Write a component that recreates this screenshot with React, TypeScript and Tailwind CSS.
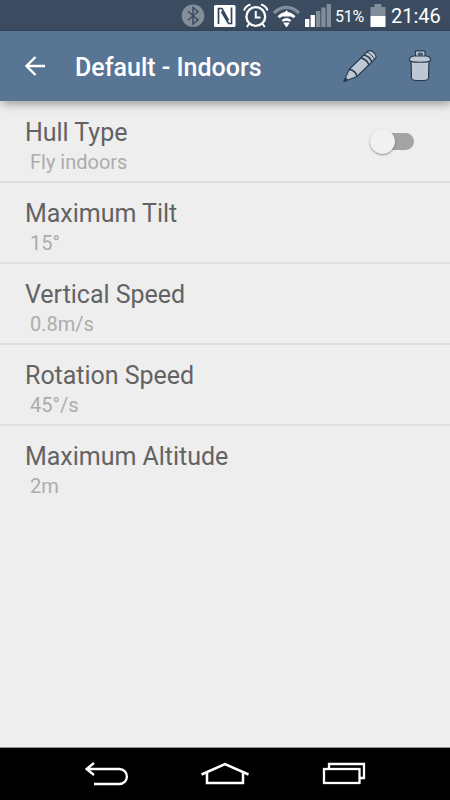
import type { ReactNode } from "react";

type Setting = {
  title: string;
  value: string;
  toggle?: boolean;
};

const settings: Setting[] = [
  { title: "Hull Type", value: "Fly indoors", toggle: true },
  { title: "Maximum Tilt", value: "15°" },
  { title: "Vertical Speed", value: "0.8m/s" },
  { title: "Rotation Speed", value: "45°/s" },
  { title: "Maximum Altitude", value: "2m" },
];

const Icon = ({ w, h, className = "", children }: { w: number; h: number; className?: string; children: ReactNode }) => (
  <svg width={w} height={h} viewBox={`0 0 ${w} ${h}`} fill="none" className={`block shrink-0 ${className}`}>
    {children}
  </svg>
);

const StatusBar = () => (
  <div className="flex h-[31px] items-start bg-[#3b4c60] pl-[181px] text-white">
    {/* Bluetooth */}
    <Icon w={24} h={31}>
      <circle cx="12" cy="15.7" r="11.3" fill="#838e9b" />
      <path d="M7 11.3L17 20L12 24V7.5L17 11.5L7 20.3" stroke="#3b4c60" strokeWidth="1.5" />
    </Icon>
    {/* NFC */}
    <Icon w={22} h={31} className="ml-[9px]">
      <rect x="0" y="5" width="21.5" height="22" rx="1.5" fill="#fff" />
      <path d="M4.500 24V8.500L8 8.500L14.500 20.500M17.500 7.500V23.500H14.500L7.500 11.500" stroke="#34465a" strokeWidth="1.7" />
    </Icon>
    {/* Alarm */}
    <Icon w={26} h={31} className="ml-[7px]">
      <circle cx="12.8" cy="16.5" r="9.4" stroke="#fff" strokeWidth="2.3" />
      <path d="M12.8 11V17.5H17.5" stroke="#fff" strokeWidth="2" />
      <path d="M1 10.5C2 7.500 4 5.500 7.500 4.500M24.600 10.500C23.600 7.500 21.600 5.500 18.100 4.500" stroke="#fff" strokeWidth="1.9" />
      <path d="M6 24L3.8 27M19.6 24L21.8 27" stroke="#fff" strokeWidth="2" />
    </Icon>
    {/* Wifi */}
    <Icon w={28} h={31} className="ml-[4px]">
      <path d="M1 13C8.500 5.500 18.500 5.500 26 13" stroke="#838e9b" strokeWidth="3.3" />
      <path d="M5.500 17.300C10.500 12.200 16.500 12.200 21.500 17.300" stroke="#fff" strokeWidth="3" />
      <path d="M9.500 21.300C12 18.900 15 18.900 17.500 21.300" stroke="#fff" strokeWidth="2.6" />
      <path d="M13.500 10L18 16.500H9ZM13.500 27.500L10 22.500H17Z" fill="#fff" />
      <path d="M9 17.500H18M9.500 22H11.500M15.500 22H17.500" stroke="#3b4c60" strokeWidth="1" />
    </Icon>
    {/* Signal */}
    <Icon w={26} h={31} className="ml-[4px]">
      <rect x="0" y="19" width="4.3" height="8" fill="#fff" />
      <rect x="5.6" y="15" width="4.3" height="12" fill="#fff" />
      <rect x="11" y="11" width="4.3" height="16" fill="#838e9b" />
      <rect x="16.3" y="7.5" width="4.3" height="19.5" fill="#838e9b" />
      <rect x="21.7" y="4" width="4.3" height="23" fill="#838e9b" />
    </Icon>
    <span className="ml-[4px] mt-[1px] w-[35px] text-[16px] leading-[31px] tracking-[-0.2px]">51%</span>
    {/* Battery */}
    <Icon w={16} h={31}>
      <path d="M0.500 16V7H4.500V4H11.500V7H15.500V16Z" fill="#838e9b" />
      <rect x="0.5" y="16" width="15" height="11" fill="#fff" />
    </Icon>
    <span className="ml-[5px] mt-[1px] text-[20px] leading-[31px]">21:46</span>
  </div>
);

const Toolbar = () => (
  <header className="relative flex h-[70px] items-center bg-[#587694] shadow-[2px_3px_9px_rgba(0,0,0,0.35)]">
    <Icon w={20} h={20} className="ml-[25px]">
      <path d="M20 10H2M10.500 1L1.500 10L10.500 19" stroke="#fff" strokeWidth="2.3" />
    </Icon>
    <h1 className="ml-[30px] mt-[3px] w-[267px] text-[25px] font-medium leading-[30px] text-white">Default - Indoors</h1>
    {/* Edit */}
    <Icon w={36} h={36}>
      <g stroke="#293a4c" strokeWidth="1.1" strokeLinejoin="round">
        <path d="M2 33.500L7 21.500L25.500 3.500C29 0.500 36.500 7 33 11L15 28.500Z" fill="#bdc8d6" />
        <path d="M7 21.500C11 21.500 14.500 25 15 28.500" strokeWidth="1.6" />
        <path d="M19 10C23 11 26 14 27 17.300M22 7C26 8 29 11 30 14.500" strokeWidth="1.7" />
        <path d="M25 4C28.500 5.500 31.500 8.500 32.500 12" strokeWidth="1" />
        <path d="M2 33.500L3.500 30L5.500 31.800Z" fill="#293a4c" />
      </g>
    </Icon>
    {/* Delete */}
    <Icon w={24} h={34} className="ml-[30px]">
      <g stroke="#293a4c" strokeWidth="1.2" strokeLinejoin="round" fill="#bdc8d6">
        <path d="M3 11H21L20.500 29.500C20 32.300 4 32.300 3.500 29.500Z" />
        <rect x="7.5" y="1.8" width="9.5" height="7" rx="0.5" />
        <rect x="10.3" y="4.2" width="4" height="2" fill="#587694" strokeWidth="0.8" />
        <path d="M1.300 11.500C1.300 8.500 3.500 7 7 7H17C20.500 7 22.700 8.500 22.700 11.500C20 13.800 4 13.800 1.300 11.500Z" />
      </g>
    </Icon>
  </header>
);

const Toggle = () => (
  <div className="relative mt-[31px] h-[17px] w-[36px] rounded-full bg-[#a3a3a3]">
    <span className="absolute -left-[8px] -top-[4px] size-[25px] rounded-full bg-[#f1f1f1] shadow-[0_1px_2px_rgba(0,0,0,0.4)]"></span>
  </div>
);

const App = () => {
  return (
    <div className="flex h-[800px] w-[450px] flex-col overflow-hidden bg-[#eeeeee] font-[Roboto,sans-serif]">
      <StatusBar />
      <Toolbar />
      <main className="flex-1 pt-px">
        {settings.map((item, i) => (
          <div
            key={item.title}
            className={`flex h-[81px] justify-between pl-[25px] pr-[36px] ${i < settings.length - 1 ? "border-b-2 border-[#dedede]" : ""}`}
          >
            <div className="pt-[16px]">
              <p className="text-[25px] leading-[30px] tracking-[-0.03px] text-[#636363]">{item.title}</p>
              <p className="-mt-px pl-[5px] text-[20px] leading-[30px] text-[#acacac]">{item.value}</p>
            </div>
            {item.toggle && <Toggle />}
          </div>
        ))}
      </main>
      <nav className="flex h-[53px] items-center border-t border-[#909090] bg-black">
        <Icon w={44} h={26} className="ml-[85px]">
          <path d="M2 8H34C44.500 8 44.500 23 34 23H9M9 2L1.500 8L9 14" stroke="#fff" strokeWidth="2.3" />
        </Icon>
        <Icon w={50} h={26} className="ml-[71px]">
          <path d="M1.500 13.500L25 3L48.500 13.500M7 12V22H43V12" stroke="#fff" strokeWidth="2.5" />
        </Icon>
        <Icon w={44} h={26} className="ml-[72px]">
          <path d="M7 8V3H42V17H38" stroke="#fff" strokeWidth="2.3" />
          <rect x="2" y="8" width="35.5" height="14" stroke="#fff" strokeWidth="2.3" />
        </Icon>
      </nav>
    </div>
  );
};

export default App;
